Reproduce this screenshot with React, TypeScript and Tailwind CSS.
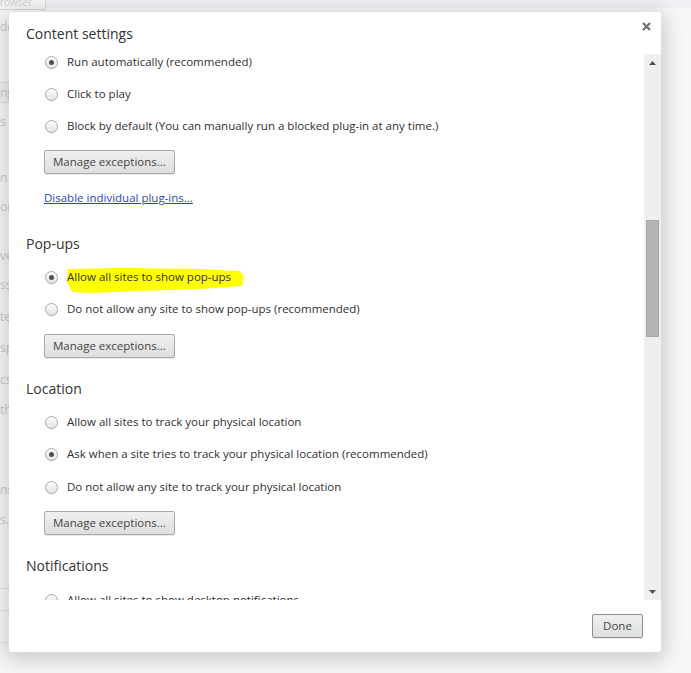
import React from "react";

const font = { fontFamily: '"Open Sans", "Noto Sans", "Liberation Sans", sans-serif' };

function Radio({ checked }: { checked?: boolean }) {
  return (
    <span className="relative flex h-[13px] w-[13px] shrink-0 items-center justify-center rounded-full border border-[#a9a9a9] bg-gradient-to-b from-[#fdfdfd] to-[#e4e4e4] shadow-[0_1px_0_rgba(0,0,0,0.05)]">
      {checked && <span className="h-[5px] w-[5px] rounded-full bg-[#4f4f4f]" />}
    </span>
  );
}

function Option({ label, checked, mt = "mt-[16px]", highlight }: { label: string; checked?: boolean; mt?: string; highlight?: boolean }) {
  return (
    <div className={`${mt} flex h-[16px] items-center pl-[36px]`}>
      <Radio checked={checked} />
      <span className="relative ml-[9px] text-[11.5px] leading-[16px] text-[#303030]">
        {highlight && (
          <svg className="absolute left-[-1px] top-[-3px] block" width="180" height="30" viewBox="0 0 180 30">
            <polygon
              points="2,3 54,2 134,3 174,5 178,11 176,20 134,23 74,25 24,27 6,26 1,16"
              fill="#ffff00"
            />
          </svg>
        )}
        <span className="relative">{label}</span>
      </span>
    </div>
  );
}

function Btn({ label, mt = "mt-[16px]" }: { label: string; mt?: string }) {
  return (
    <div className={`${mt} pl-[35px]`}>
      <button className="flex h-[24px] items-center rounded-[2px] border border-[#a8a8a8] bg-gradient-to-b from-[#f0f0f0] to-[#dedede] px-[8px] text-[11.5px] text-[#444] shadow-[0_1px_0_rgba(0,0,0,0.08)]">
        {label}
      </button>
    </div>
  );
}

function Heading({ label, mt }: { label: string; mt: string }) {
  return (
    <div className={`${mt} flex h-[20px] items-center pl-[17px] text-[14px] text-[#333]`}>{label}</div>
  );
}

export default function App() {
  const bgFrags: [string, string][] = [
    ["de", "mt-[11px]"],
    ["ng", "mt-[47px]"],
    ["s t", "mt-[11px]"],
    ["n", "mt-[40px]"],
    ["or", "mt-[13px]"],
    ["ve", "mt-[33px]"],
    ["ss", "mt-[13px]"],
    ["te", "mt-[16px]"],
    ["sp", "mt-[15px]"],
    ["cs", "mt-[16px]"],
    ["th", "mt-[14px]"],
    ["ns", "mt-[64px]"],
    ["s.", "mt-[14px]"],
  ];
  return (
    <div className="relative h-[673px] w-[691px] overflow-hidden bg-[#f7f7f7]" style={font}>
      {/* background page */}
      <div className="flex h-[8px] bg-[#eef0f6]">
        <div className="h-[10px] w-[46px] overflow-hidden rounded-br-[2px] border-b border-r border-[#d8d8d8] bg-[#f6f6f6] text-[10px] leading-[4px] text-[#cfcfcf]">
          rowser
        </div>
      </div>
      <div className="flex flex-col text-[12px] leading-[16px] text-[#c9c9c9]">
        {bgFrags.map(([t, m], i) =>
          t === "ng" ? (
            <div key={i} className={`${m} flex h-[21px] w-[300px] items-center border-y border-[#e2e2e2] bg-[#f2f2f2]`}>
              {t}
            </div>
          ) : (
            <div key={i} className={m}>{t}</div>
          )
        )}
        <div className="mt-[60px] h-[1px] w-[300px] bg-[#e2e2e2]" />
        <div className="mt-[21px] h-[1px] w-[300px] bg-[#e2e2e2]" />
        <div className="mt-[31px] h-[1px] w-[300px] bg-[#e6e6e6]" />
      </div>

      {/* dialog */}
      <div className="absolute left-[9px] top-[12px] flex h-[640px] w-[652px] flex-col rounded-[3px] bg-white shadow-[0_4px_20px_4px_rgba(0,0,0,0.18)]">
        <div className="relative flex h-[42px] shrink-0 items-end pb-[10px] pl-[17px] text-[14px] text-[#333]">
          Content settings
          <svg className="absolute right-[10px] top-[10px]" width="9" height="9" viewBox="0 0 9 9">
            <path d="M1 1 L8 8 M8 1 L1 8" stroke="#6e6e6e" strokeWidth="2.2" />
          </svg>
        </div>
        <div className="flex h-[546px] shrink-0">
          <div className="flex flex-1 flex-col overflow-hidden">
            <Option label="Run automatically (recommended)" checked mt="mt-0" />
            <Option label="Click to play" />
            <Option label="Block by default (You can manually run a blocked plug-in at any time.)" />
            <Btn label="Manage exceptions..." />
            <div className="mt-[16px] flex h-[16px] items-center pl-[35px]">
              <span className="text-[11.5px] text-[#2a45c8] underline">Disable individual plug-ins...</span>
            </div>
            <Heading label="Pop-ups" mt="mt-[27px]" />
            <Option label="Allow all sites to show pop-ups" checked highlight />
            <Option label="Do not allow any site to show pop-ups (recommended)" />
            <Btn label="Manage exceptions..." mt="mt-[17px]" />
            <Heading label="Location" mt="mt-[20px]" />
            <Option label="Allow all sites to track your physical location" />
            <Option label="Ask when a site tries to track your physical location (recommended)" checked />
            <Option label="Do not allow any site to track your physical location" mt="mt-[17px]" />
            <Btn label="Manage exceptions..." />
            <Heading label="Notifications" mt="mt-[20px]" />
            <Option label="Allow all sites to show desktop notifications" mt="mt-[17px]" />
          </div>
          <div className="flex w-[17px] shrink-0 flex-col items-center bg-[#efefef]">
            <div className="flex h-[17px] w-full items-center justify-center">
              <svg width="7" height="4" viewBox="0 0 7 4"><path d="M3.5 0 L7 4 L0 4 Z" fill="#505050" /></svg>
            </div>
            <div className="mt-[149px] h-[117px] w-[13px] border border-[#a6a6a6] bg-[#b4b4b4]" />
            <div className="flex-1" />
            <div className="flex h-[17px] w-full items-center justify-center">
              <svg width="7" height="4" viewBox="0 0 7 4"><path d="M0 0 L7 0 L3.5 4 Z" fill="#505050" /></svg>
            </div>
          </div>
        </div>
        <div className="flex flex-1 items-start justify-end pr-[18px] pt-[14px]">
          <button className="flex h-[24px] w-[51px] items-center justify-center rounded-[2px] border border-[#8f8f8f] bg-gradient-to-b from-[#f0f0f0] to-[#dedede] text-[11.5px] text-[#444] shadow-[0_1px_0_rgba(0,0,0,0.08)]">
            Done
          </button>
        </div>
      </div>
    </div>
  );
}
